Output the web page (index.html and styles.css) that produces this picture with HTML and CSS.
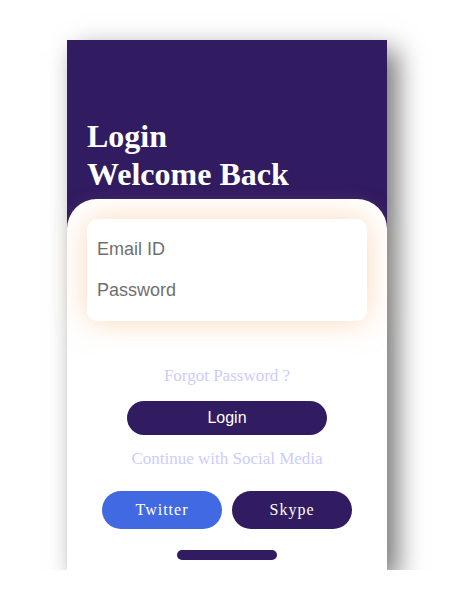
FILE: index.html
```html
<!DOCTYPE html>
<html>
<head>
<meta charset="utf-8">
<link rel="stylesheet" href="styles.css">
</head>
<body>
<div class="page">
  <div class="phone">
    <div class="header">
      <h1 class="title">Login<br>Welcome Back</h1>
    </div>
    <div class="sheet">
      <div class="card">
        <input class="field" type="text" placeholder="Email ID">
        <input class="field" type="password" placeholder="Password">
      </div>
      <div class="forgot">Forgot Password ?</div>
      <button class="login-btn">Login</button>
      <div class="continue">Continue with Social Media</div>
      <div class="social">
        <button class="social-btn twitter">Twitter</button>
        <button class="social-btn skype">Skype</button>
      </div>
      <div class="home-bar"></div>
    </div>
  </div>
</div>
</body>
</html>
```

FILE: styles.css
```css
html, body {
  margin: 0;
  padding: 0;
  background: #fff;
}
.page {
  padding: 40px 0 0 67px;
}
.phone {
  width: 320px;
  height: 530px;
  background: #311b61;
  box-shadow: 10px 10px 25px rgba(0, 0, 0, 0.55);
  display: flex;
  flex-direction: column;
}
.header {
  height: 159px;
  padding-left: 20px;
  box-sizing: border-box;
  display: flex;
  align-items: flex-end;
}
.title {
  margin: 0 0 6px 0;
  font-family: "Liberation Serif", serif;
  font-weight: bold;
  font-size: 32px;
  line-height: 38px;
  color: #fff;
}
.sheet {
  flex: 1;
  background: #fff;
  border-radius: 30px 30px 0 0;
  padding: 20px 20px 0 20px;
  display: flex;
  flex-direction: column;
  align-items: center;
}
.card {
  align-self: stretch;
  background: #fff;
  border-radius: 10px;
  padding: 10px;
  box-shadow: 0 0 30px rgba(248, 190, 140, 0.6);
  display: flex;
  flex-direction: column;
}
.field {
  height: 41px;
  border: none;
  outline: none;
  padding: 0;
  font-family: "Liberation Sans", Arial, sans-serif;
  font-size: 18px;
  background: transparent;
}
.field::placeholder {
  color: #6f6f6f;
}
.forgot {
  margin-top: 45px;
  font-family: "Liberation Serif", serif;
  font-size: 17px;
  line-height: 20px;
  color: #ccccff;
}
.login-btn {
  margin-top: 15px;
  width: 200px;
  height: 34px;
  border: none;
  border-radius: 17px;
  background: #311b61;
  color: #fff;
  font-family: "Liberation Sans", Arial, sans-serif;
  font-size: 16px;
  padding: 0;
}
.continue {
  margin-top: 14px;
  font-family: "Liberation Serif", serif;
  font-size: 17px;
  line-height: 20px;
  color: #ccccff;
}
.social {
  margin-top: 22px;
  display: flex;
  gap: 10px;
}
.social-btn {
  width: 120px;
  height: 38px;
  border: none;
  border-radius: 19px;
  color: #fff;
  font-family: "Liberation Serif", serif;
  font-size: 16px;
  letter-spacing: 1px;
  padding: 0;
}
.twitter {
  background: #4169e1;
}
.skype {
  background: #311b61;
}
.home-bar {
  margin-top: 21px;
  width: 100px;
  height: 10px;
  border-radius: 5px;
  background: #311b61;
}
```
